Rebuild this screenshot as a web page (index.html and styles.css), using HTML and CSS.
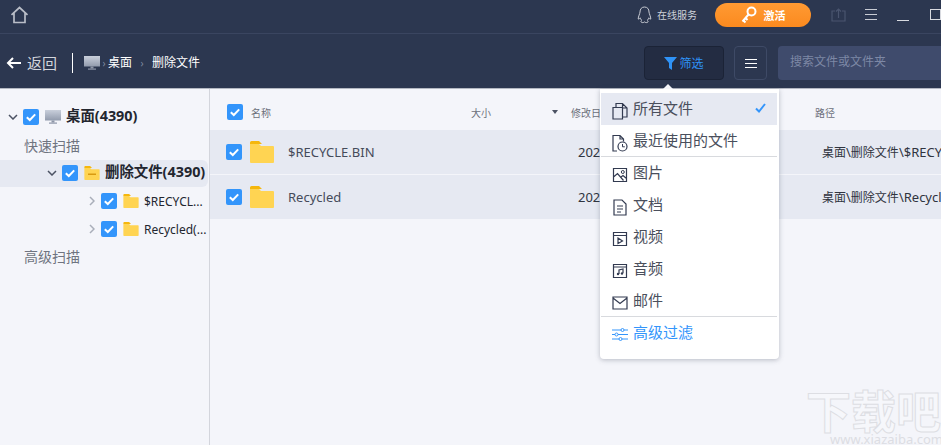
FILE: index.html
```html
<!DOCTYPE html>
<html lang="zh-CN">
<head>
<meta charset="utf-8">
<title>删除文件</title>
<link rel="stylesheet" href="styles.css">
</head>
<body>
<svg class="defs" width="0" height="0" aria-hidden="true">
  <symbol id="check" viewBox="0 0 16 16"><rect width="16" height="16" rx="2" fill="#3395fb"/><path d="M3.8 8.2l3 2.8 5.4-5.6" fill="none" stroke="#fff" stroke-width="2"/></symbol>
  <symbol id="folder" viewBox="0 0 24 22"><path d="M0 1.5A1.5 1.5 0 0 1 1.5 0H9l3 3H0z" fill="#f5b70d"/><path d="M0 3h9l2 2h12a1 1 0 0 1 1 1v15a1 1 0 0 1-1 1H1a1 1 0 0 1-1-1z" fill="#ffd452"/></symbol>
  <symbol id="monitor" viewBox="0 0 16 14"><defs><linearGradient id="mg" x1="0" y1="0" x2="0" y2="1"><stop offset="0" stop-color="#c9cfdb"/><stop offset="1" stop-color="#929bad"/></linearGradient></defs><rect width="16" height="10.5" fill="url(#mg)"/><rect x="6.5" y="10.5" width="3" height="2" fill="#8d96a8"/><rect x="4" y="12.5" width="8" height="1.2" fill="#8d96a8"/></symbol>
</svg>
<div class="app">
  <header class="titlebar">
    <svg class="home" width="19" height="18" viewBox="0 0 19 18"><path d="M1.5 8.8L9.5 1.5l8 7.3M4 7v9.5h11V7" fill="none" stroke="#b9bdc7" stroke-width="1.7"/></svg>
    <div class="title-right">
      <div class="service">
        <svg width="15" height="18" viewBox="0 0 15 18"><path d="M7.5 1C4.5 1 3 3.2 3 6c0 1.5-1.8 4.5-1.8 7 .8.5 1.6-.6 2-1.2.4 1.5 1 2 1.8 2.7-1 .4-1.5 1.2-.5 1.9 1 .4 2.2.2 3-.5.8.7 2 .9 3 .5 1-.7.5-1.5-.5-1.9.8-.7 1.4-1.200 1.800-2.700.4.600 1.200 1.700 2 1.200C13.800 10.500 12 7.500 12 6c0-2.800-1.500-5-4.500-5z" fill="none" stroke="#c9ccd4" stroke-width="1"/></svg>
        <span>在线服务</span>
      </div>
      <button class="activate">
        <svg width="16" height="18" viewBox="0 0 16 18"><circle cx="10.5" cy="5.5" r="4" fill="none" stroke="#fff" stroke-width="2"/><path d="M7.5 8.5L1.5 15.5M2.5 14.5l2 2M4.5 12l2 2" fill="none" stroke="#fff" stroke-width="2"/></svg>
        <span>激活</span>
      </button>
      <svg class="share" width="15" height="14" viewBox="0 0 15 14"><path d="M4 3H1v10h13V3h-3M7.5 10V1M5 3.5L7.5 1 10 3.5" fill="none" stroke="#4a556f" stroke-width="1.2"/></svg>
      <div class="win-menu"><i></i><i></i><i></i></div>
      <div class="win-min"></div>
      <div class="win-max"></div>
    </div>
  </header>
  <nav class="toolbar">
    <svg class="back" width="15" height="12" viewBox="0 0 15 12"><path d="M15 6H2M7 1L2 6l5 5" fill="none" stroke="#fff" stroke-width="2"/></svg>
    <span class="back-label">返回</span>
    <span class="sep"></span>
    <svg class="crumb-icon" width="16" height="14"><use href="#monitor"/></svg>
    <span class="arrow first">›</span>
    <span class="crumb">桌面</span>
    <span class="arrow second">›</span>
    <span class="crumb">删除文件</span>
    <div class="tools">
      <button class="filter">
        <svg width="13" height="13" viewBox="0 0 13 13"><path d="M0 0h13L8 6v7L5 11V6z" fill="#2f93f7"/></svg>
        <span>筛选</span>
      </button>
      <button class="list-btn"><i></i><i></i><i></i></button>
      <div class="search">搜索文件或文件夹</div>
    </div>
  </nav>
  <div class="body">
    <aside class="sidebar">
      <div class="tree root">
        <svg class="chev" width="10" height="6" viewBox="0 0 10 6"><path d="M1 1l4 4 4-4" fill="none" stroke="#4b5263" stroke-width="1.5"/></svg>
        <svg class="cb" width="16" height="16"><use href="#check"/></svg>
        <svg class="tree-ic" width="16" height="14"><use href="#monitor"/></svg>
        <b>桌面(4390)</b>
      </div>
      <div class="section first-sec">快速扫描</div>
      <div class="tree level1 active">
        <svg class="chev" width="10" height="6" viewBox="0 0 10 6"><path d="M1 1l4 4 4-4" fill="none" stroke="#4b5263" stroke-width="1.5"/></svg>
        <svg class="cb" width="16" height="16"><use href="#check"/></svg>
        <svg class="tree-ic" width="16" height="14" viewBox="0 0 16 14"><use href="#folder" width="16" height="14"/><rect x="4" y="7.5" width="8" height="1.5" fill="#d99a10"/></svg>
        <b>删除文件(4390)</b>
      </div>
      <div class="tree level2">
        <svg class="chev" width="6" height="10" viewBox="0 0 6 10"><path d="M1 1l4 4-4 4" fill="none" stroke="#a9aeb9" stroke-width="1.5"/></svg>
        <svg class="cb" width="16" height="16"><use href="#check"/></svg>
        <svg class="tree-ic" width="16" height="14"><use href="#folder"/></svg>
        <span>$RECYCL...</span>
      </div>
      <div class="tree level2">
        <svg class="chev" width="6" height="10" viewBox="0 0 6 10"><path d="M1 1l4 4-4 4" fill="none" stroke="#a9aeb9" stroke-width="1.5"/></svg>
        <svg class="cb" width="16" height="16"><use href="#check"/></svg>
        <svg class="tree-ic" width="16" height="14"><use href="#folder"/></svg>
        <span>Recycled(...</span>
      </div>
      <div class="section">高级扫描</div>
    </aside>
    <main class="files">
      <div class="row head">
        <svg class="cb" width="16" height="16"><use href="#check"/></svg>
        <span class="c-name">名称</span>
        <span class="c-size">大小</span>
        <span class="c-sort"></span>
        <span class="c-date">修改日期</span>
        <span class="c-path">路径</span>
      </div>
      <div class="row item">
        <svg class="cb" width="16" height="16"><use href="#check"/></svg>
        <svg class="fold" width="24" height="22"><use href="#folder"/></svg>
        <span class="c-name">$RECYCLE.BIN</span>
        <span class="c-date">2020-12-18</span>
        <span class="c-path"><span class="cjk">桌面</span>\<span class="cjk">删除文件</span>\$RECYCLE.BIN</span>
      </div>
      <div class="row item">
        <svg class="cb" width="16" height="16"><use href="#check"/></svg>
        <svg class="fold" width="24" height="22"><use href="#folder"/></svg>
        <span class="c-name">Recycled</span>
        <span class="c-date">2020-12-18</span>
        <span class="c-path"><span class="cjk">桌面</span>\<span class="cjk">删除文件</span>\Recycled</span>
      </div>
    </main>
  </div>
  <div class="menu">
    <div class="menu-item selected">
      <svg width="16" height="18" viewBox="0 0 16 18"><path d="M1 5.5h9.5V17H1zM4 5.5V1.5h6.5L15 6v9h-4.5M10.5 1.5V6H15" fill="none" stroke="#323a50" stroke-width="1.2"/></svg>
      <span>所有文件</span>
      <svg class="tick" width="11" height="10" viewBox="0 0 11 10"><path d="M1 5.5L4 8.5 10 1" fill="none" stroke="#3395fb" stroke-width="2"/></svg>
    </div>
    <div class="menu-item ruled">
      <svg width="16" height="18" viewBox="0 0 16 18"><path d="M5 17H1V1.5h7l3.5 3.5v2.5M8 1.5V5h3.5" fill="none" stroke="#323a50" stroke-width="1.2"/><circle cx="10.5" cy="12.5" r="4.5" fill="#fff" stroke="#323a50" stroke-width="1.2"/><path d="M10.5 10v2.8h2.3" fill="none" stroke="#323a50"/></svg>
      <span>最近使用的文件</span>
    </div>
    <div class="menu-item">
      <svg width="16" height="16" viewBox="0 0 16 16"><path d="M1.5 1.5h13v13h-13zM1.5 10l4-3.5 6 7M9 10l2-1.5 3.500 3" fill="none" stroke="#323a50" stroke-width="1.2"/><circle cx="10.8" cy="5" r="1.5" fill="none" stroke="#323a50"/></svg>
      <span>图片</span>
    </div>
    <div class="menu-item">
      <svg width="16" height="17" viewBox="0 0 16 17"><path d="M2 1h8l4 4v11H2zM5 7h6M5 10h6M5 13h4" fill="none" stroke="#323a50" stroke-width="1.2"/></svg>
      <span>文档</span>
    </div>
    <div class="menu-item">
      <svg width="16" height="16" viewBox="0 0 16 16"><path d="M1.5 1.5h13v13h-13zM1.5 4.5h13M6 7l4.500 3L6 12.500z" fill="none" stroke="#323a50" stroke-width="1.2"/></svg>
      <span>视频</span>
    </div>
    <div class="menu-item">
      <svg width="16" height="16" viewBox="0 0 16 16"><path d="M1.5 1.5h13v13h-13zM1.5 4h13M7 11V7l4-1v4" fill="none" stroke="#323a50" stroke-width="1.2"/><circle cx="6" cy="11" r="1.2" fill="#323a50"/><circle cx="10" cy="10.5" r="1.2" fill="#323a50"/></svg>
      <span>音频</span>
    </div>
    <div class="menu-item ruled">
      <svg width="16" height="14" viewBox="0 0 16 14"><path d="M1 1h14v12H1zM1 2l7 5.5L15 2" fill="none" stroke="#323a50" stroke-width="1.2"/></svg>
      <span>邮件</span>
    </div>
    <div class="menu-item advanced">
      <svg width="16" height="13" viewBox="0 0 16 13"><path d="M0 2h9M12 2h4M0 6.5h3M6 6.5h10M0 11h7M10 11h6" fill="none" stroke="#3395fb"/><circle cx="10.5" cy="2" r="1.5" fill="none" stroke="#3395fb"/><circle cx="4.5" cy="6.5" r="1.5" fill="none" stroke="#3395fb"/><circle cx="8.5" cy="11" r="1.5" fill="none" stroke="#3395fb"/></svg>
      <span>高级过滤</span>
    </div>
  </div>
  <div class="menu-notch"></div>
  <div class="watermark">
    <div class="wm-title">下载吧</div>
    <div class="wm-url">www.xiazaiba.com</div>
  </div>
</div>
</body>
</html>
```
FILE: styles.css
```css
* { box-sizing: border-box; }
html, body { margin: 0; padding: 0; height: 100%; overflow: hidden; }
body { font-family: "Noto Sans", "Noto Sans CJK SC", sans-serif; background: #f4f5fa; }
.defs { position: absolute; }
svg { display: block; flex: none; }
button { font: inherit; padding: 0; cursor: pointer; }
.app { position: relative; width: 941px; height: 445px; overflow: hidden; display: flex; flex-direction: column; }

.titlebar { height: 34px; flex: none; background: #2c3750; border-bottom: 1px solid #3a4560; display: flex; align-items: center; padding-left: 10px; }
.home { margin-top: -3px; }
.title-right { margin-left: auto; display: flex; align-items: center; margin-top: -4px; }
.service { display: flex; align-items: center; gap: 5px; font-size: 10px; color: #cfd2da; margin-right: 18px; }
.activate { width: 96px; height: 24px; border: 0; border-radius: 12px; background: linear-gradient(#ff9a33, #fb8a1f); color: #fff; font-size: 11px; font-weight: 700; display: flex; align-items: center; justify-content: center; gap: 7px; margin-right: 20px; }
.share { margin-right: 19px; }
.win-menu { width: 12px; display: flex; flex-direction: column; gap: 4px; margin-right: 20px; }
.win-menu i { display: block; height: 1px; background: #c9ccd4; }
.win-min { width: 12px; height: 1px; background: #d8dae0; margin-top: 11px; margin-right: 21px; }
.win-max { width: 11px; height: 11px; border: 1px solid #d8dae0; }

.toolbar { height: 55px; flex: none; background: #2c3750; border-bottom: 1px solid #b4b8c2; display: flex; align-items: center; padding: 4px 0 0 6px; color: #fff; }
.back-label { font-size: 15px; margin-left: 6px; color: #d3d6dd; width: 30px; line-height: 20px; }
.sep { width: 1px; height: 20px; background: #fff; margin: 0 11px 0 15px; }
.crumb { font-size: 12px; line-height: 16px; }
.arrow { font-size: 10px; color: #7e889f; text-align: center; }
.arrow.first { width: 8px; }
.arrow.second { width: 20px; }
.tools { margin-left: auto; display: flex; align-items: center; }
.filter { width: 80px; height: 34px; background: #232c42; border: 1px solid #1b2336; border-radius: 4px; color: #2f93f7; font-size: 12px; display: flex; align-items: center; justify-content: center; gap: 2px; margin-right: 10px; }
.list-btn { width: 33px; height: 34px; background: transparent; border: 1px solid #3e4a66; border-radius: 4px; display: flex; flex-direction: column; align-items: center; justify-content: center; gap: 3px; margin-right: 11px; }
.list-btn i { display: block; width: 12px; height: 1px; background: #fff; }
.search { width: 163px; height: 34px; background: #3f4b6c; border-radius: 4px 0 0 4px; color: #7d88a5; font-size: 12px; line-height: 32px; padding-left: 12px; }

.body { flex: 1; display: flex; min-height: 0; }
.sidebar { width: 210px; flex: none; border-right: 1px solid #d3d5dc; padding-top: 14px; display: flex; flex-direction: column; color: #23262f; font-size: 12px; }
.tree { display: flex; align-items: center; height: 28px; flex: none; }
.tree b { font-weight: 700; font-size: 14.4px; line-height: 18px; margin-top: -2px; white-space: nowrap; }
.root { padding-left: 8px; }
.root .chev { margin-right: 5px; }
.root .tree-ic { margin: 0 5px 0 6px; }
.section { height: 29px; line-height: 27px; padding-left: 24px; color: #6f7480; font-size: 14px; flex: none; }
.first-sec { margin-top: 1px; }
.level1 { height: 27px; margin-top: -1px; padding: 0 0 1px 47px; background: #e6e9f2; border-radius: 0 6px 6px 0; width: 208px; }
.level1 .chev { margin-right: 5px; }
.level1 .tree-ic { margin: 0 5px 0 6px; }
.level2 { padding-left: 89px; }
.level2 .chev { margin-right: 6px; }
.level2 .tree-ic { margin: 0 5px 0 6px; }
.level2 span { font-size: 12px; white-space: nowrap; }

.files { flex: 1; min-width: 0; display: flex; flex-direction: column; }
.row { position: relative; display: grid; align-items: center; white-space: nowrap; }
.head { height: 41px; padding: 5px 0 0 17px; font-size: 10px; color: #6c707b; grid-template-columns: 24px 220px 81px 19px 244px 1fr; }
.head .c-sort { width: 0; height: 0; border: 3.5px solid transparent; border-top: 4px solid #4b5263; border-bottom: 0; }
.item { height: 44px; margin-bottom: 1px; background: #e6e9f2; font-size: 13px; color: #454b5a; grid-template-columns: 24px 38px 290px 244px 1fr; padding-left: 16px; }
.item .c-path { overflow: hidden; color: #30343f; }
.item .c-date { color: #30343f; }
.cjk { font-size: 12px; }

.menu { position: absolute; left: 600px; top: 89px; width: 179px; height: 270px; background: #fff; border-radius: 0 0 4px 4px; box-shadow: 0 1px 5px rgba(70, 75, 95, .35); padding: 4px 2px 0 1px; color: #4a4f5c; font-size: 15px; display: flex; flex-direction: column; }
.menu-notch { position: absolute; left: 663px; top: 84px; width: 0; height: 0; border: 5px solid transparent; border-bottom-color: #f4f5fa; border-top: 0; }
.menu-item { height: 32px; flex: none; display: flex; align-items: center; padding-left: 11px; }
.menu-item > svg:first-child { width: 16px; margin: 4px 5px 0 0; }
.menu-item span { line-height: 20px; margin-top: -2px; }
.selected { background: #e6e9f2; }
.tick { margin-left: auto; margin-right: 11px; margin-top: -2px; }
.ruled { border-bottom: 1px solid #d8dade; }
.advanced { color: #3395fb; }
.menu-item.advanced > svg:first-child { margin-top: 2px; }

.watermark { position: absolute; left: 806px; top: 386px; width: 135px; text-align: center; pointer-events: none; }
.wm-title { font-size: 45px; line-height: 48px; font-weight: 700; color: #f6f7fb; -webkit-text-stroke: 1px #dddee3; font-family: "Noto Sans CJK SC", sans-serif; white-space: nowrap; }
.wm-url { font-size: 13px; line-height: 11px; color: #dcdde3; margin-left: 24px; white-space: nowrap; }
```
